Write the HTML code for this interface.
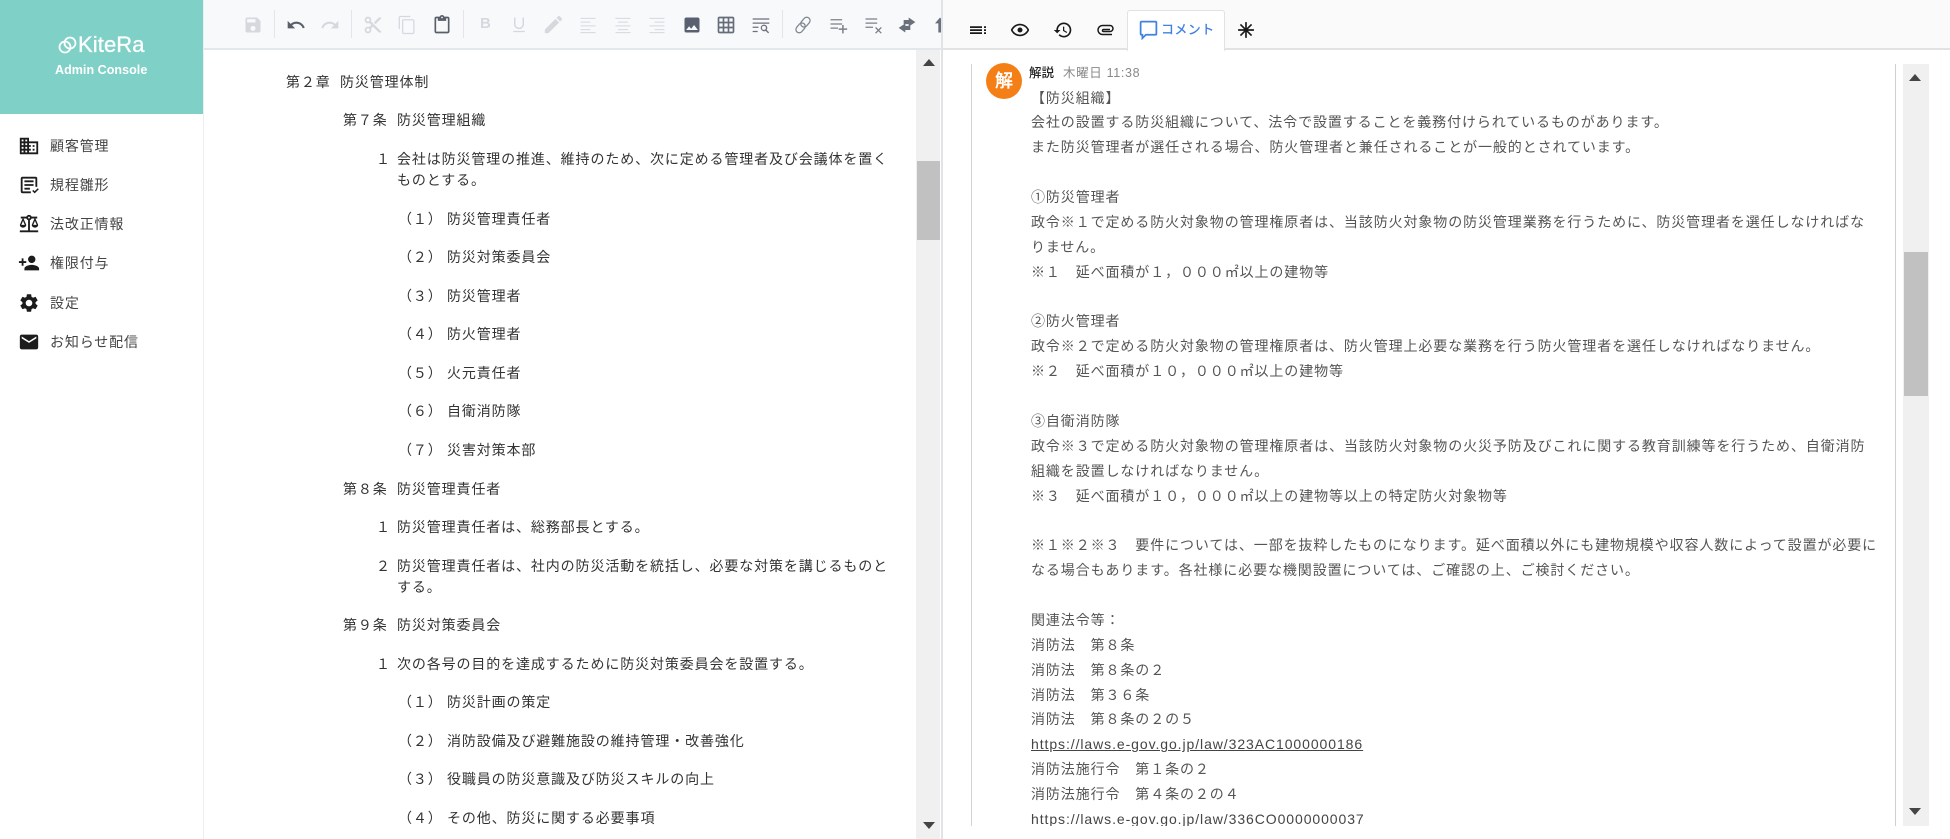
<!DOCTYPE html>
<html lang="ja"><head><meta charset="utf-8"><title>KiteRa Admin Console</title>
<style>
*{box-sizing:border-box}
html,body{margin:0;padding:0;width:1950px;height:839px;overflow:hidden;background:#fff;font-family:"Liberation Sans","Noto Sans CJK JP",sans-serif}
.abs,.abs>*{position:absolute}
#side{left:0;top:0;width:204px;height:839px;border-right:1px solid #eceef2;background:#fff}
#hd{left:0;top:0;width:203px;height:114px;background:#7fd1c7;color:#fff}
.nav{left:50px;font-size:14px;line-height:20px;letter-spacing:.85px;color:#444;white-space:nowrap}
.ni{left:18px;width:22px;height:22px;fill:#1c1c1c}
#tb{left:204px;top:0;width:737px;height:50px;background:#f8f9fb;border-bottom:2px solid #e3e6eb;overflow:hidden}
.ti{position:absolute;top:14.500px;width:20px;height:20px;fill:#d6d8dd}
.sep{position:absolute;top:10px;width:1px;height:28px;background:#e3e5e9}
.l{position:absolute;font-size:14px;line-height:20px;letter-spacing:.88px;color:#333;white-space:nowrap}
#div{left:941px;top:0;width:2px;height:839px;background:#e2e3e6}
.sb{background:#f0f0f0}
.th{background:#c1c1c1}
.up{width:0;height:0;border-left:6px solid transparent;border-right:6px solid transparent;border-bottom:7px solid #444}
.dn{width:0;height:0;border-left:6px solid transparent;border-right:6px solid transparent;border-top:7px solid #444}
#rt{left:943px;top:0;width:1007px;height:50px;background:#fafafa;border-bottom:2px solid #e2e2e2}
.ri{position:absolute;top:20px;width:20px;height:20px;fill:#1a1a1a}
#tab{left:184px;top:10px;width:98px;height:41px;background:#fff;border:1px solid #e2e2e2;border-bottom:none;border-radius:3px 3px 0 0}
#c{left:1031px;top:85.500px;width:860px;height:740px;overflow:hidden;font-size:14px;line-height:24.870px;letter-spacing:.9px;color:#555;white-space:pre}
#c a{color:#444;text-decoration:underline;letter-spacing:.92px}
#c .u{letter-spacing:.92px;color:#444}
</style></head><body>

<div id="side" class="abs">
 <div id="hd" class="abs">
  <svg style="left:58px;top:36px;width:19px;height:18px" viewBox="0 0 19 18" fill="none" stroke="#fff" stroke-width="1.800"><circle cx="7" cy="11" r="5.500"/><circle cx="12" cy="7" r="5.500"/></svg>
  <div style="left:78px;top:31px;font-size:22px;line-height:28px;letter-spacing:.1px;-webkit-text-stroke:.3px #fff;white-space:nowrap">KiteRa</div>
  <div style="left:55px;top:61px;font-size:12.500px;line-height:18px;font-weight:700;letter-spacing:.05px;white-space:nowrap">Admin Console</div>
 </div>
 <svg class="ni" style="top:135px" viewBox="0 0 24 24"><path d="M12 7V3H2v18h20V7H12zM6 19H4v-2h2v2zm0-4H4v-2h2v2zm0-4H4V9h2v2zm0-4H4V5h2v2zm4 12H8v-2h2v2zm0-4H8v-2h2v2zm0-4H8V9h2v2zm0-4H8V5h2v2zm10 12h-8v-2h2v-2h-2v-2h2v-2h-2V9h8v10zm-2-8h-2v2h2v-2zm0 4h-2v2h2v-2z"/></svg>
 <svg class="ni" style="top:174px" viewBox="0 0 24 24"><path d="M5 3h14a2 2 0 0 1 2 2v9h-2V5H5v14h9v2H5a2 2 0 0 1-2-2V5a2 2 0 0 1 2-2zm2 4h10v2H7zm0 4h10v2H7zm0 4h6v2H7z"/><path d="M15.500 18.500l1.200-1.200 1.500 1.500 3.300-3.300 1.200 1.200-4.500 4.500z"/></svg>
 <svg class="ni" style="top:213px" viewBox="0 0 24 24"><path d="M13 7.830c.85-.3 1.530-.98 1.830-1.830H18l-3 7c0 1.660 1.570 3 3.500 3s3.500-1.340 3.500-3l-3-7h2V4h-6.170c-.41-1.170-1.520-2-2.830-2s-2.420.83-2.830 2H3v2h2l-3 7c0 1.660 1.570 3 3.500 3S9 14.660 9 13L6 6h3.170c.3.85.98 1.530 1.830 1.830V19H2v2h20v-2h-9V7.830zM20.370 13h-3.740l1.870-4.360L20.370 13zm-13 0H3.630L5.500 8.640 7.370 13zM12 6c-.55 0-1-.45-1-1 0-.55.45-1 1-1s1 .45 1 1c0 .55-.45 1-1 1z"/></svg>
 <svg class="ni" style="top:252px" viewBox="0 0 24 24"><path d="M15 12c2.210 0 4-1.790 4-4s-1.790-4-4-4-4 1.790-4 4 1.790 4 4 4zm-9-2V7H4v3H1v2h3v3h2v-3h3v-2H6zm9 4c-2.670 0-8 1.340-8 4v2h16v-2c0-2.660-5.330-4-8-4z"/></svg>
 <svg class="ni" style="top:292px" viewBox="0 0 24 24"><path d="M19.140 12.940c.04-.3.06-.61.06-.94 0-.32-.02-.64-.07-.94l2.030-1.580c.18-.14.23-.41.12-.61l-1.920-3.320c-.12-.22-.37-.29-.59-.22l-2.390.96c-.5-.38-1.030-.7-1.620-.94l-.36-2.540c-.04-.24-.24-.41-.48-.41h-3.840c-.24 0-.43.17-.47.41l-.36 2.540c-.59.24-1.130.57-1.620.94l-2.390-.96c-.22-.08-.47 0-.59.22L2.740 8.870c-.12.21-.08.47.12.61l2.030 1.580c-.05.3-.09.63-.09.94s.02.64.07.94l-2.030 1.580c-.18.14-.23.41-.12.61l1.920 3.320c.12.22.37.29.59.22l2.390-.96c.5.38 1.030.7 1.620.94l.36 2.540c.05.24.24.41.48.41h3.840c.24 0 .44-.17.47-.41l.36-2.540c.59-.24 1.130-.56 1.620-.94l2.390.96c.22.08.47 0 .59-.22l1.920-3.320c.12-.22.07-.47-.12-.61l-2.010-1.580zM12 15.600c-1.980 0-3.600-1.620-3.600-3.600s1.620-3.600 3.600-3.600 3.600 1.620 3.600 3.600-1.620 3.600-3.600 3.600z"/></svg>
 <svg class="ni" style="top:331px" viewBox="0 0 24 24"><path d="M20 4H4c-1.100 0-1.990.9-1.990 2L2 18c0 1.100.9 2 2 2h16c1.100 0 2-.9 2-2V6c0-1.100-.9-2-2-2zm0 4l-8 5-8-5V6l8 5 8-5v2z"/></svg>
 <div class="nav" style="top:136px">顧客管理</div>
 <div class="nav" style="top:175px">規程雛形</div>
 <div class="nav" style="top:214px">法改正情報</div>
 <div class="nav" style="top:253px">権限付与</div>
 <div class="nav" style="top:293px">設定</div>
 <div class="nav" style="top:332px">お知らせ配信</div>
</div>

<div id="tb" class="abs">
 <svg class="ti" style="left:39px" viewBox="0 0 24 24"><path d="M17 3H5c-1.110 0-2 .9-2 2v14c0 1.100.89 2 2 2h14c1.100 0 2-.9 2-2V7l-4-4zm-5 16c-1.660 0-3-1.340-3-3s1.340-3 3-3 3 1.340 3 3-1.340 3-3 3zm3-10H5V5h10v4z"/></svg>
 <div class="sep" style="left:70px"></div>
 <svg class="ti" style="left:82px;fill:#5a6069" viewBox="0 0 24 24"><path d="M12.500 8c-2.650 0-5.050.99-6.900 2.600L2 7v9h9l-3.620-3.620c1.390-1.160 3.160-1.880 5.120-1.880 3.540 0 6.550 2.310 7.600 5.500l2.370-.78C21.080 11.030 17.150 8 12.500 8z"/></svg>
 <svg class="ti" style="left:116px" viewBox="0 0 24 24"><path d="M18.400 10.600C16.550 8.990 14.150 8 11.500 8c-4.650 0-8.580 3.030-9.960 7.220L3.900 16c1.050-3.190 4.050-5.500 7.600-5.500 1.950 0 3.730.72 5.120 1.880L13 16h9V7l-3.600 3.600z"/></svg>
 <div class="sep" style="left:147px"></div>
 <svg class="ti" style="left:159px" viewBox="0 0 24 24"><path d="M9.640 7.640c.23-.5.36-1.050.36-1.640 0-2.210-1.790-4-4-4S2 3.790 2 6s1.790 4 4 4c.59 0 1.140-.13 1.640-.36L10 12l-2.360 2.360C7.140 14.130 6.590 14 6 14c-2.210 0-4 1.790-4 4s1.790 4 4 4 4-1.790 4-4c0-.59-.13-1.140-.36-1.640L12 14l7 7h3v-1L9.640 7.640zM6 8c-1.100 0-2-.89-2-2s.9-2 2-2 2 .89 2 2-.9 2-2 2zm0 12c-1.100 0-2-.89-2-2s.9-2 2-2 2 .89 2 2-.9 2-2 2zm6-7.500c-.28 0-.5-.22-.5-.5s.22-.5.5-.5.5.22.5.5-.22.5-.5.5zM19 3l-6 6 2 2 7-7V3z"/></svg>
 <svg class="ti" style="left:193px" viewBox="0 0 24 24"><path d="M16 1H4c-1.100 0-2 .9-2 2v14h1.500V2.500H16V1zm3 4H8c-1.100 0-2 .9-2 2v14c0 1.100.9 2 2 2h11c1.100 0 2-.9 2-2V7c0-1.100-.9-2-2-2zm.5 16.500h-12v-15h12v15z"/></svg>
 <svg class="ti" style="left:228px;fill:#5a6069" viewBox="0 0 24 24"><path d="M19 2h-4.180C14.400.84 13.300 0 12 0c-1.300 0-2.400.84-2.820 2H5c-1.100 0-2 .9-2 2v16c0 1.100.9 2 2 2h14c1.100 0 2-.9 2-2V4c0-1.100-.9-2-2-2zm-7 0c.55 0 1 .45 1 1s-.45 1-1 1-1-.45-1-1 .45-1 1-1zm7 18H5V4h2v3h10V4h2v16z"/></svg>
 <div class="sep" style="left:259px"></div>
 <div style="position:absolute;left:276px;top:14px;font-size:15px;font-weight:700;line-height:20px;color:#d6d8dd">B</div>
 <svg class="ti" style="left:305px" viewBox="0 0 24 24"><path d="M12 17c3.310 0 6-2.690 6-6V3h-1.800v8c0 2.300-1.900 4.200-4.200 4.200S7.800 13.300 7.800 11V3H6v8c0 3.310 2.690 6 6 6zm-7 2v1.600h14V19H5z"/></svg>
 <svg class="ti" style="left:338px;top:12.500px;width:23px;height:23px" viewBox="0 0 24 24"><path d="M3 17.250V21h3.750L17.810 9.940l-3.750-3.750L3 17.250zM20.710 7.040c.39-.39.39-1.020 0-1.410l-2.340-2.340c-.39-.39-1.020-.39-1.410 0l-1.830 1.830 3.750 3.750 1.830-1.830z"/></svg>
 <svg class="ti" style="left:374px" viewBox="0 0 24 24"><path d="M3 3.500h18v1.200H3zM3 8h12v1.200H3zM3 12.500h18v1.200H3zM3 17h12v1.200H3zM3 20.500h18v1.200H3z"/></svg>
 <svg class="ti" style="left:409px" viewBox="0 0 24 24"><path d="M3 3.500h18v1.200H3zM6 8h12v1.200H6zM3 12.500h18v1.200H3zM6 17h12v1.200H6zM3 20.500h18v1.200H3z"/></svg>
 <svg class="ti" style="left:443px" viewBox="0 0 24 24"><path d="M3 3.500h18v1.200H3zM9 8h12v1.200H9zM3 12.500h18v1.200H3zM9 17h12v1.200H9zM3 20.500h18v1.200H3z"/></svg>
 <svg class="ti" style="left:478px;fill:#596070" viewBox="0 0 24 24"><path d="M21 19V5c0-1.100-.9-2-2-2H5c-1.100 0-2 .9-2 2v14c0 1.100.9 2 2 2h14c1.100 0 2-.9 2-2zM8.500 13.500l2.500 3.010L14.500 12l4.500 6H5l3.500-4.500z"/></svg>
 <svg class="ti" style="left:512px;fill:#656c7a" viewBox="0 0 24 24"><path d="M20 2H4c-1.100 0-2 .9-2 2v16c0 1.100.9 2 2 2h16c1.100 0 2-.9 2-2V4c0-1.100-.9-2-2-2zM8 20H4v-4h4v4zm0-6H4v-4h4v4zm0-6H4V4h4v4zm6 12h-4v-4h4v4zm0-6h-4v-4h4v4zm0-6h-4V4h4v4zm6 12h-4v-4h4v4zm0-6h-4v-4h4v4zm0-6h-4V4h4v4z"/></svg>
 <svg class="ti" style="left:547px;fill:#6a707c" viewBox="0 0 24 24"><path d="M2 4h20v1.500H2zM2 9h20v1.500H2zM2 14h7v1.500H2zM2 19h6v1.500H2z"/><path d="M15.500 11.500a4 4 0 0 1 3.200 6.400l3 3-1.100 1.100-3-3a4 4 0 1 1-2.100-7.500zm0 1.600a2.400 2.400 0 1 0 0 4.800 2.400 2.400 0 0 0 0-4.800z"/></svg>
 <div class="sep" style="left:578px"></div>
 <svg class="ti" style="left:589px;fill:none;stroke:#7f858f;stroke-width:1.500" viewBox="0 0 24 24"><g transform="rotate(-50 12 12)"><rect x="1" y="8" width="13" height="8" rx="4"/><rect x="10" y="8" width="13" height="8" rx="4"/></g></svg>
 <svg class="ti" style="left:624px;fill:#7a808a" viewBox="0 0 24 24"><path d="M3 5h14v1.500H3zM3 10h14v1.500H3zM3 15h9v1.500H3zM17 12h1.800v4H23v1.800h-4.200V22H17v-4.200h-4.200V16H17z"/></svg>
 <svg class="ti" style="left:659px;fill:#7a808a" viewBox="0 0 24 24"><path d="M3 4h14v1.500H3zM3 9h14v1.500H3zM3 14h9v1.500H3zM14.500 15.500l1.100-1.100 2.900 2.900 2.900-2.900 1.100 1.100-2.900 2.900 2.900 2.900-1.100 1.100-2.900-2.900-2.900 2.900-1.100-1.100 2.900-2.900z"/></svg>
 <svg class="ti" style="left:693px;fill:#6b717a" viewBox="0 0 24 24"><path d="M14 3l8 5.500-8 5.500v-3H8V6h6zM10 10v3h6v5h-6v3l-8-5.500z"/></svg>
 <svg class="ti" style="left:726px;fill:#6b717a" viewBox="0 0 24 24"><path d="M12 3l6 7h-4v11h-4V10H6z"/></svg>
</div>

<div class="abs" style="left:204px;top:51px;width:712px;height:788px;overflow:hidden">
<div class="l" style="left:82px;top:21px">第２章</div><div class="l" style="left:136px;top:21px">防災管理体制</div>
<div class="l" style="left:139px;top:59.400px">第７条</div><div class="l" style="left:193px;top:59.400px">防災管理組織</div>
<div class="l" style="left:172px;top:98px">１</div><div class="l" style="left:193px;top:98px">会社は防災管理の推進、維持のため、次に定める管理者及び会議体を置く</div>
<div class="l" style="left:193px;top:119px">ものとする。</div>
<div class="l" style="left:194px;top:157.600px">（１）</div><div class="l" style="left:243px;top:157.600px">防災管理責任者</div>
<div class="l" style="left:194px;top:196.200px">（２）</div><div class="l" style="left:243px;top:196.200px">防災対策委員会</div>
<div class="l" style="left:194px;top:234.700px">（３）</div><div class="l" style="left:243px;top:234.700px">防災管理者</div>
<div class="l" style="left:194px;top:273.300px">（４）</div><div class="l" style="left:243px;top:273.300px">防火管理者</div>
<div class="l" style="left:194px;top:311.800px">（５）</div><div class="l" style="left:243px;top:311.800px">火元責任者</div>
<div class="l" style="left:194px;top:350.400px">（６）</div><div class="l" style="left:243px;top:350.400px">自衛消防隊</div>
<div class="l" style="left:194px;top:388.900px">（７）</div><div class="l" style="left:243px;top:388.900px">災害対策本部</div>
<div class="l" style="left:139px;top:427.500px">第８条</div><div class="l" style="left:193px;top:427.500px">防災管理責任者</div>
<div class="l" style="left:172px;top:466px">１</div><div class="l" style="left:193px;top:466px">防災管理責任者は、総務部長とする。</div>
<div class="l" style="left:172px;top:504.600px">２</div><div class="l" style="left:193px;top:504.600px">防災管理責任者は、社内の防災活動を統括し、必要な対策を講じるものと</div>
<div class="l" style="left:193px;top:525.600px">する。</div>
<div class="l" style="left:139px;top:564.200px">第９条</div><div class="l" style="left:193px;top:564.200px">防災対策委員会</div>
<div class="l" style="left:172px;top:602.700px">１</div><div class="l" style="left:193px;top:602.700px">次の各号の目的を達成するために防災対策委員会を設置する。</div>
<div class="l" style="left:194px;top:641.300px">（１）</div><div class="l" style="left:243px;top:641.300px">防災計画の策定</div>
<div class="l" style="left:194px;top:679.800px">（２）</div><div class="l" style="left:243px;top:679.800px">消防設備及び避難施設の維持管理・改善強化</div>
<div class="l" style="left:194px;top:718.400px">（３）</div><div class="l" style="left:243px;top:718.400px">役職員の防災意識及び防災スキルの向上</div>
<div class="l" style="left:194px;top:757px">（４）</div><div class="l" style="left:243px;top:757px">その他、防災に関する必要事項</div>
</div>

<div class="abs sb" style="left:916px;top:50px;width:24px;height:789px"></div>
<div class="abs th" style="left:917px;top:161px;width:23px;height:79px"></div>
<div class="abs up" style="left:923px;top:59px"></div>
<div class="abs dn" style="left:923px;top:822px"></div>
<div id="div" class="abs"></div>

<div id="rt" class="abs">
 <svg class="ri" style="left:26px" viewBox="0 0 20 20"><path d="M1 6.200h12V8H1zM1 9.200h12V11H1zM1 12.200h12V14H1zM15 6.200h2V8h-2zM15 9.200h2V11h-2zM15 12.200h2V14h-2z"/></svg>
 <svg class="ri" style="left:67px" viewBox="0 0 24 24"><path d="M12 6.500c3.790 0 7.170 2.130 8.820 5.500C19.170 15.370 15.790 17.500 12 17.500S4.830 15.370 3.180 12C4.830 8.630 8.210 6.500 12 6.500m0-2C7 4.500 2.730 7.610 1 12c1.730 4.390 6 7.500 11 7.500s9.270-3.110 11-7.500c-1.730-4.390-6-7.500-11-7.500zm0 4.500a3 3 0 1 1 0 6 3 3 0 0 1 0-6z"/></svg>
 <svg class="ri" style="left:110px" viewBox="0 0 24 24"><path d="M13 3c-4.970 0-9 4.030-9 9H1l3.890 3.890.07.14L9 12H6c0-3.870 3.130-7 7-7s7 3.130 7 7-3.130 7-7 7c-1.930 0-3.680-.79-4.940-2.060l-1.420 1.420C8.270 19.990 10.510 21 13 21c4.970 0 9-4.030 9-9s-4.030-9-9-9zm-1 5v5l4.280 2.540.72-1.210-3.500-2.080V8H12z"/></svg>
 <svg style="left:154px;top:24px;width:18px;height:12px" viewBox="0 0 18 12" fill="none" stroke="#1a1a1a" stroke-width="1.500"><path d="M15 10.500H5.500a4.500 4.500 0 0 1 0-9H13a3 3 0 0 1 0 6H6.500a1 1 0 0 1 0-2H13"/></svg>
 <div id="tab" class="abs">
  <svg style="left:9.500px;top:8px;width:21px;height:21px" viewBox="0 0 24 24" fill="none" stroke="#3f83e0" stroke-width="2"><path d="M4 3h16a1 1 0 0 1 1 1v13a1 1 0 0 1-1 1H9l-4 4v-4H4a1 1 0 0 1-1-1V4a1 1 0 0 1 1-1z"/></svg>
  <div style="left:33px;top:9px;font-size:13px;line-height:20px;letter-spacing:.4px;color:#3f83e0;font-weight:500;white-space:nowrap">コメント</div>
 </div>
 <svg class="ri" style="left:293px" viewBox="0 0 24 24"><path d="M11 2.500h2v7.100l5-5 1.400 1.400-5 5h7.100v2h-7.100l5 5L18 19.400l-5-5v7.100h-2v-7.100l-5 5L4.600 18l5-5H2.500v-2h7.100l-5-5L6 4.600l5 5z"/></svg>
</div>

<div class="abs" style="left:971px;top:64px;width:1px;height:762px;background:#d4d4d4"></div>
<div class="abs" style="left:1895px;top:64px;width:1px;height:762px;background:#d0d0d0"></div>
<div class="abs" style="left:986px;top:63px;width:36px;height:36px;border-radius:50%;background:#f57f17;color:#fff;font-size:18px;font-weight:700;line-height:36px;text-align:center">解</div>
<div class="abs" style="left:1029px;top:63px;font-size:12.500px;line-height:20px;font-weight:500;color:#222;white-space:nowrap">解説</div>
<div class="abs" style="left:1063px;top:63px;font-size:12.500px;line-height:20px;letter-spacing:.65px;color:#888;white-space:nowrap">木曜日 11:38</div>
<div id="c" class="abs">【防災組織】
会社の設置する防災組織について、法令で設置することを義務付けられているものがあります。
また防災管理者が選任される場合、防火管理者と兼任されることが一般的とされています。

①防災管理者
政令※１で定める防火対象物の管理権原者は、当該防火対象物の防災管理業務を行うために、防災管理者を選任しなければな
りません。
※１　延べ面積が１，０００㎡以上の建物等

②防火管理者
政令※２で定める防火対象物の管理権原者は、防火管理上必要な業務を行う防火管理者を選任しなければなりません。
※２　延べ面積が１０，０００㎡以上の建物等

③自衛消防隊
政令※３で定める防火対象物の管理権原者は、当該防火対象物の火災予防及びこれに関する教育訓練等を行うため、自衛消防
組織を設置しなければなりません。
※３　延べ面積が１０，０００㎡以上の建物等以上の特定防火対象物等

※１※２※３　要件については、一部を抜粋したものになります。延べ面積以外にも建物規模や収容人数によって設置が必要に
なる場合もあります。各社様に必要な機関設置については、ご確認の上、ご検討ください。

関連法令等：
消防法　第８条
消防法　第８条の２
消防法　第３６条
消防法　第８条の２の５
<a>https://laws.e-gov.go.jp/law/323AC1000000186</a>
消防法施行令　第１条の２
消防法施行令　第４条の２の４
<span class="u">https://laws.e-gov.go.jp/law/336CO0000000037</span></div>
<div class="abs sb" style="left:1903px;top:64px;width:26px;height:762px"></div>
<div class="abs th" style="left:1904px;top:252px;width:24px;height:144px"></div>
<div class="abs up" style="left:1909px;top:74px"></div>
<div class="abs dn" style="left:1909px;top:808px"></div>
</body></html>
